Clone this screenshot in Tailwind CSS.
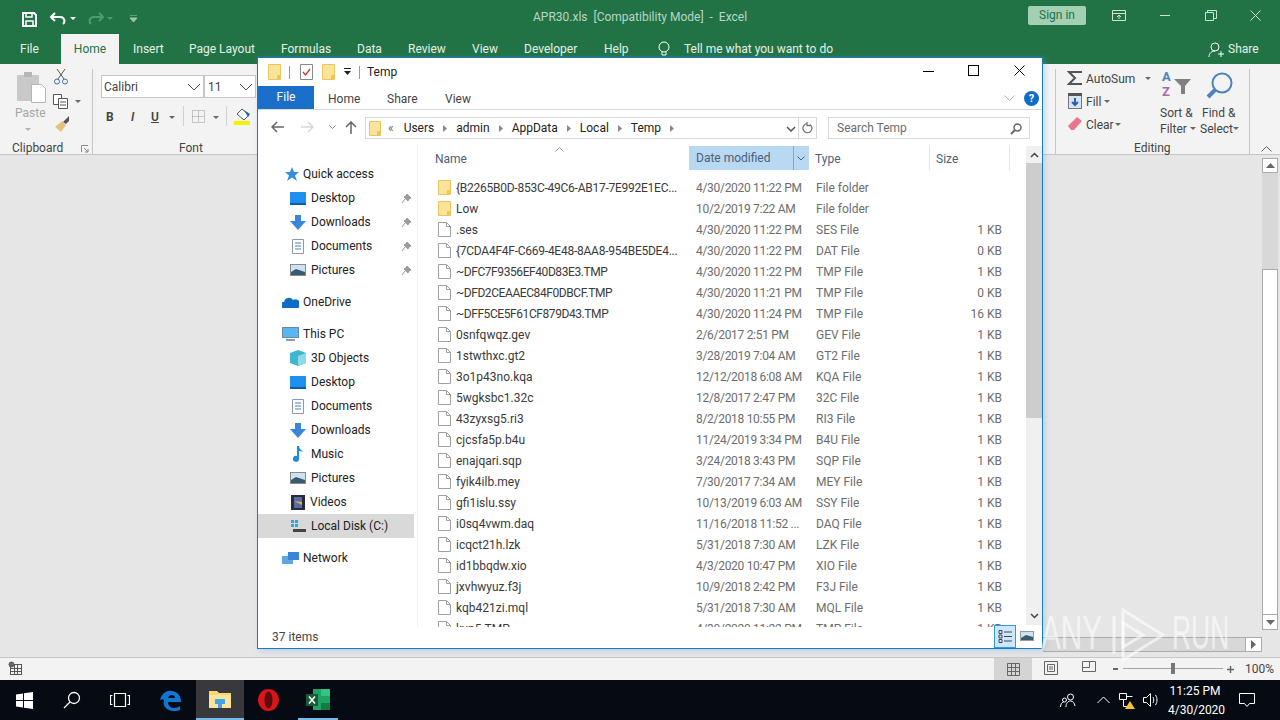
<!DOCTYPE html>
<html>
<head>
<meta charset="utf-8">
<script src="https://cdn.jsdelivr.net/npm/@tailwindcss/browser@4"></script>
</head>
<body class="w-[1280px] h-[720px] overflow-hidden font-['Roboto',sans-serif] text-[12px] relative bg-[#e6e6e6]">
<div class="flex flex-col h-[720px]">
  <!-- title bar -->
  <div class="h-[38px] bg-[#217346] flex items-center text-white relative shrink-0">
    <svg class="ml-[22px]" width="15" height="15" viewBox="0 0 15 15" fill="none" stroke="#fff" stroke-width="2"><path d="M1 1h11l2 2v11H1z"/><path d="M4 1v4h6V1M4 14V9h7v5" stroke-width="1.5"/></svg>
    <svg class="ml-[13px]" width="17" height="14" viewBox="0 0 17 14" fill="none" stroke="#fff" stroke-width="2"><path d="M5 1L1 5l4 4M1 5h9a4 4 0 0 1 3 7"/></svg>
    <svg class="ml-[3px]" width="7" height="4"><path d="M0 0h6L3 3z" fill="#fff"/></svg>
    <svg class="ml-[10px]" width="17" height="14" viewBox="0 0 17 14" fill="none" stroke="#4d9b70" stroke-width="2"><path d="M12 1l4 4-4 4M16 5H7a4 4 0 0 0-3 7"/></svg>
    <svg class="ml-[3px]" width="7" height="4"><path d="M0 0h6L3 3z" fill="#4d9b70"/></svg>
    <svg class="ml-[15px]" width="9" height="8"><path d="M1 0h7M1 3h7L4.500 7z" stroke="#9cc7ae" fill="#9cc7ae"/></svg>
    <div class="absolute left-[533px] top-[8px] text-[#b9d6c6] text-[12px] whitespace-pre">APR30.xls  [Compatibility Mode]  -  Excel</div>
    <div class="absolute left-[1028px] top-[6px] w-[58px] h-[19px] bg-[#a3d0b5] rounded-[2px] text-[#217346] text-center leading-[19px]">Sign in</div>
    <svg class="absolute left-[1112px] top-[10px]" width="14" height="11" fill="none" stroke="#cfe3d7"><path d="M.500.500h13v10H.500zM.500 3.500h13M7 9V5M5 7l2-2 2 2"/></svg>
    <div class="absolute left-[1160px] top-[15px] w-[10px] h-px bg-[#cfe3d7]"></div>
    <svg class="absolute left-[1205px] top-[10px]" width="12" height="11" fill="none" stroke="#cfe3d7"><path d="M.500 2.500h8v8h-8zM2.500 2.500V.500h9v8h-3"/></svg>
    <svg class="absolute left-[1250px] top-[10px]" width="11" height="11" fill="none" stroke="#cfe3d7"><path d="M.500.500l10 10M10.500.500l-10 10"/></svg>
  </div>
  <!-- tabs -->
  <div class="h-[26px] bg-[#217346] flex items-center text-[#e6f0ea] relative shrink-0">
    <span class="absolute left-[20px] top-[2px]">File</span>
    <div class="absolute left-[61px] top-[-4px] w-[58px] h-[30px] bg-[#f3f3f3] text-[#217346] text-center leading-[30px]">Home</div>
    <span class="absolute left-[133px] top-[2px]">Insert</span>
    <span class="absolute left-[189px] top-[2px]">Page Layout</span>
    <span class="absolute left-[281px] top-[2px]">Formulas</span>
    <span class="absolute left-[357px] top-[2px]">Data</span>
    <span class="absolute left-[408px] top-[2px]">Review</span>
    <span class="absolute left-[472px] top-[2px]">View</span>
    <span class="absolute left-[524px] top-[2px]">Developer</span>
    <span class="absolute left-[604px] top-[2px]">Help</span>
    <svg class="absolute left-[658px] top-[3px]" width="12" height="16" fill="none" stroke="#fff"><circle cx="6" cy="6" r="5"/><path d="M4 11v3h4v-3"/></svg>
    <span class="absolute left-[684px] top-[2px]">Tell me what you want to do</span>
    <svg class="absolute left-[1208px] top-[3px]" width="16" height="18" fill="none" stroke="#fff"><circle cx="7" cy="6" r="4"/><path d="M1 16c0-4 3-6 6-6M10 13h6M13 10v6"/></svg>
    <span class="absolute left-[1228px] top-[2px]">Share</span>
  </div>
  <!-- ribbon -->
  <div class="h-[91px] bg-[#f3f3f3] border-b border-[#c6c6c6] relative text-[#444] shrink-0">
    <svg class="absolute left-[16px] top-[8px]" width="30" height="34"><rect x="1" y="3" width="22" height="26" fill="#c9c9c9"/><rect x="8" y="0" width="8" height="5" fill="#b5b5b5"/><path d="M15.500 12.500h10l4 4v14h-14z" fill="#fff" stroke="#b5b5b5"/></svg>
    <span class="absolute left-[15px] top-[40px] text-[#a6a6a6]">Paste</span>
    <svg class="absolute left-[25px] top-[64px]" width="7" height="4"><path d="M0 0h6L3 3z" fill="#b5b5b5"/></svg>
    <svg class="absolute left-[53px] top-[5px]" width="16" height="16" fill="none" stroke="#555"><path d="M4 0l7 10M12 0L5 10" /><circle cx="4" cy="12.500" r="2.500" stroke="#3a6ea5"/><circle cx="12" cy="12.500" r="2.500" stroke="#3a6ea5"/></svg>
    <svg class="absolute left-[53px] top-[30px]" width="16" height="15" fill="#fff" stroke="#555"><path d="M.500.500h8v10h-8z"/><path d="M5.500 4.500h9v10h-9zM7 8h6M7 11h6"/></svg>
    <svg class="absolute left-[75px] top-[36px]" width="7" height="4"><path d="M0 0h6L3 3z" fill="#666"/></svg>
    <svg class="absolute left-[54px] top-[52px]" width="16" height="16"><path d="M9 6l6-6v5l-3 3z" fill="#555"/><path d="M1 11l7-6 4 4-5 7z" fill="#e3c27f"/></svg>
    <span class="absolute left-[12px] top-[75px] text-[#444]">Clipboard</span>
    <svg class="absolute left-[81px] top-[81px]" width="8" height="8" fill="none" stroke="#888"><path d="M.500 7V.500H7M3 3l4 4M7 4v3H4"/></svg>
    <div class="absolute left-[92px] top-[5px] w-px h-[85px] bg-[#c6c6c6]"></div>

    <div class="absolute left-[101px] top-[11px] w-[103px] h-[23px] bg-white border border-[#c6c6c6] pl-[2px] leading-[22px]">Calibri<svg class="absolute right-[2px] top-[7px]" width="14" height="8" fill="none" stroke="#555"><path d="M1 1l6 6 6-6"/></svg></div>
    <div class="absolute left-[204px] top-[11px] w-[52px] h-[23px] bg-white border border-[#c6c6c6] pl-[3px] leading-[22px]">11<svg class="absolute right-[2px] top-[7px]" width="14" height="8" fill="none" stroke="#555"><path d="M1 1l6 6 6-6"/></svg></div>
    <span class="absolute left-[106px] top-[44px] font-bold">B</span>
    <span class="absolute left-[131px] top-[44px] italic font-semibold">I</span>
    <span class="absolute left-[151px] top-[44px] underline font-semibold">U</span>
    <svg class="absolute left-[169px] top-[52px]" width="7" height="4"><path d="M0 0h6L3 3z" fill="#666"/></svg>
    <div class="absolute left-[183px] top-[42px] w-px h-[20px] bg-[#d0d0d0]"></div>
    <svg class="absolute left-[192px] top-[46px]" width="13" height="13" fill="none" stroke="#999" stroke-dasharray="1 1"><path d="M.500.500h12v12H.500zM6.500.500v12M.500 6.500h12"/></svg>
    <svg class="absolute left-[213px] top-[52px]" width="7" height="4"><path d="M0 0h6L3 3z" fill="#666"/></svg>
    <div class="absolute left-[226px] top-[42px] w-px h-[20px] bg-[#d0d0d0]"></div>
    <svg class="absolute left-[234px] top-[44px]" width="17" height="18"><path d="M8 1l7 6-5 5-7-6z" fill="#fff" stroke="#555"/><path d="M10 2l6 4-2 3z" fill="#2e5fa8"/><rect x="0" y="13" width="16" height="4" fill="#f5f200"/></svg>
    <span class="absolute left-[179px] top-[75px]">Font</span>

    <div class="absolute left-[1055px] top-[5px] w-px h-[85px] bg-[#c6c6c6]"></div>
    <svg class="absolute left-[1067px] top-[6px]" width="16" height="16" fill="none" stroke="#555" stroke-width="2"><path d="M15 2H2l6 6-6 6h13"/></svg>
    <span class="absolute left-[1086px] top-[6px]">AutoSum</span>
    <svg class="absolute left-[1145px] top-[13px]" width="7" height="4"><path d="M0 0h6L3 3z" fill="#666"/></svg>
    <svg class="absolute left-[1068px] top-[29px]" width="14" height="16"><rect x=".5" y=".5" width="13" height="15" fill="#d8e4f2" stroke="#777"/><rect y="0" width="14" height="3" fill="#555"/><path d="M7 5v7M4 9l3 3 3-3" stroke="#2e5fa8" stroke-width="2" fill="none"/></svg>
    <span class="absolute left-[1086px] top-[29px]">Fill</span>
    <svg class="absolute left-[1104px] top-[36px]" width="7" height="4"><path d="M0 0h6L3 3z" fill="#666"/></svg>
    <svg class="absolute left-[1068px] top-[53px]" width="14" height="13"><path d="M0 9l9-9 5 4-8 9H3z" fill="#e9778c"/></svg>
    <span class="absolute left-[1086px] top-[52px]">Clear</span>
    <svg class="absolute left-[1115px] top-[59px]" width="7" height="4"><path d="M0 0h6L3 3z" fill="#666"/></svg>
    <span class="absolute left-[1162px] top-[6px] font-bold text-[13px] leading-[14px] text-[#4d82bf]">A</span>
    <span class="absolute left-[1162px] top-[21px] font-bold text-[13px] leading-[14px] text-[#a26db0]">Z</span>
    <svg class="absolute left-[1174px] top-[15px]" width="17" height="15"><path d="M0 0h17l-6 7v8H7V7z" fill="#808080"/></svg>
    <span class="absolute left-[1160px] top-[40px]">Sort &amp;</span>
    <span class="absolute left-[1160px] top-[56px]">Filter</span>
    <svg class="absolute left-[1190px] top-[63px]" width="7" height="4"><path d="M0 0h6L3 3z" fill="#666"/></svg>
    <svg class="absolute left-[1205px] top-[7px]" width="30" height="30" fill="none" stroke="#4d82bf"><circle cx="17" cy="12" r="9.500" stroke-width="2"/><path d="M10 19l-7 7" stroke-width="4"/></svg>
    <span class="absolute left-[1202px] top-[40px]">Find &amp;</span>
    <span class="absolute left-[1200px] top-[56px]">Select</span>
    <svg class="absolute left-[1233px] top-[63px]" width="7" height="4"><path d="M0 0h6L3 3z" fill="#666"/></svg>
    <span class="absolute left-[1134px] top-[75px]">Editing</span>
    <div class="absolute left-[1249px] top-[5px] w-px h-[85px] bg-[#c6c6c6]"></div>
    <svg class="absolute left-[1261px] top-[82px]" width="11" height="6" fill="none" stroke="#666"><path d="M.500 5.500l5-5 5 5"/></svg>
  </div>
  <!-- sheet -->
  <div class="flex-1 bg-[#e6e6e6] relative">
    <div class="absolute left-[1262px] top-[3px] w-[16px] h-[472px] bg-[#d8d8d8]">
      <div class="h-[15px] bg-white border border-[#ababab] flex items-center justify-center"><svg width="9" height="5"><path d="M0 5h9L4.500 0z" fill="#666"/></svg></div>
      <div class="absolute top-[111px] left-0 w-[16px] h-[346px] bg-white border border-[#ababab]"></div>
      <div class="absolute bottom-0 left-0 w-[16px] h-[16px] bg-white border border-[#ababab] flex items-center justify-center"><svg width="9" height="5"><path d="M0 0h9L4.500 5z" fill="#666"/></svg></div>
    </div>
    <div class="absolute left-[1043px] top-[482px] w-[202px] h-[15px] bg-[#d8d8d8] border-y border-[#ababab]"></div>
    <div class="absolute left-[1245px] top-[482px] w-[17px] h-[15px] bg-white border border-[#ababab] flex items-center justify-center"><svg width="5" height="9"><path d="M0 0l5 4.500L0 9z" fill="#666"/></svg></div>
    <div class="absolute left-0 right-0 bottom-0 h-px bg-[#c6c6c6]"></div>
  </div>
  <!-- status bar -->
  <div class="h-[22px] bg-[#f3f3f3] relative shrink-0 text-[#444]">
    <svg class="absolute left-[8px] top-[3px]" width="14" height="14" fill="none" stroke="#555"><rect x="2.500" y="3.500" width="11" height="10"/><path d="M2.500 7.500h11M2.500 10.500h11M6.500 3.500v10M9.500 3.500v10"/><circle cx="3.500" cy="3.500" r="2.500" fill="#666"/></svg>
    <div class="absolute left-[994px] top-0 w-[38px] h-[22px] bg-[#d4d4d4] flex items-center justify-center"><svg width="13" height="13" fill="none" stroke="#666"><path d="M.500.500h12v12H.500zM4.500.500v12M8.500.500v12M.500 4.500h12M.500 8.500h12"/></svg></div>
    <svg class="absolute left-[1044px] top-[3px]" width="14" height="14" fill="none" stroke="#666"><path d="M.500.500h13v13H.500zM3.500 3.500h7v7h-7zM5 6h4M5 8h4"/></svg>
    <svg class="absolute left-[1082px] top-[3px]" width="14" height="14" fill="none" stroke="#666"><path d="M.500.500h13v10H.500zM7.500.500v6M.500 6.500h7"/></svg>
    <div class="absolute left-[1113px] top-[10px] w-[5px] h-[2px] bg-[#666]"></div>
    <div class="absolute left-[1123px] top-[10px] w-[100px] h-px bg-[#a6a6a6]"></div>
    <div class="absolute left-[1171px] top-[5px] w-[4px] h-[11px] bg-[#777]"></div>
    <svg class="absolute left-[1227px] top-[8px]" width="7" height="7"><path d="M0 3.500h7M3.500 0v7" stroke="#666" stroke-width="1.500"/></svg>
    <span class="absolute left-[1245px] top-[2px] text-[#444]">100%</span>
  </div>
  <!-- taskbar -->
  <div class="h-[40px] bg-[#060a13] relative shrink-0 text-white">
    <svg class="absolute left-[16px] top-[12px]" width="17" height="17" fill="#fff"><path d="M0 2.500l7-1v6.500H0zM8 1.300l9-1.300v8H8zM0 9h7v6.500l-7-1zM8 9h9v8l-9-1.300z"/></svg>
    <svg class="absolute left-[63px] top-[11px]" width="18" height="18" fill="none" stroke="#fff" stroke-width="1.300"><circle cx="11" cy="7" r="5.500"/><path d="M7 11l-6 6"/></svg>
    <svg class="absolute left-[110px] top-[13px]" width="20" height="14" fill="none" stroke="#fff" stroke-width="1.200"><path d="M4.500.500h11v13h-11zM2.500 2.500H.500v9h2M17.500 2.500h2v9h-2"/></svg>
    <svg class="absolute left-[160px] top-[10px]" width="22" height="21" viewBox="0 0 22 21"><path fill-rule="evenodd" fill="#0f78d4" d="M0 10C2 3 7 0 12 1c6 1 9 5 9 11H8c0 4 3 6 6 6 2 0 5-1 6-2v4c-6 2-11 1-14-2-2-2-3-4-2-7C4 9 2 9 0 10zM8 8h7c0-4-6-4-7 0z"/></svg>
    <div class="absolute left-[196px] top-0 w-[48px] h-[40px] bg-[#39393d] border-b-[2px] border-[#76b9ed]"></div>
    <svg class="absolute left-[209px] top-[10px]" width="22" height="19"><path d="M0 1h8l2 2h12v15H0z" fill="#f8d775"/><rect x="0" y="5" width="22" height="13" fill="#fce49c"/><path d="M6 9h10v5h-3v4H9v-4H6z" fill="#3fa6e8"/></svg>
    <svg class="absolute left-[258px] top-[9px]" width="21" height="22"><ellipse cx="10.500" cy="11" rx="10.500" ry="11" fill="#d8141c"/><ellipse cx="10.500" cy="11" rx="4" ry="8.500" fill="#5c0a0e"/></svg>
    <svg class="absolute left-[306px] top-[9px]" width="25" height="22"><rect x="7" y="0" width="17" height="21" fill="#21a366"/><rect x="15" y="0" width="9" height="7" fill="#33c481"/><rect x="15" y="14" width="9" height="7" fill="#107c41"/><rect x="0" y="5" width="12" height="12" fill="#185c37"/><path d="M3 7.500l6 7M9 7.500l-6 7" stroke="#fff" stroke-width="1.500"/></svg>
    <div class="absolute left-[298px] bottom-0 w-[40px] h-[2px] bg-[#76b9ed]"></div>
    <svg class="absolute left-[1060px] top-[13px]" width="16" height="15" fill="none" stroke="#fff"><circle cx="10.500" cy="4" r="3"/><path d="M6 14c0-4 2-6 4.500-6s4 2 4.500 5M.500 14c.2-3 1-4.500 3-5"/><circle cx="4.500" cy="7" r="2"/></svg>
    <svg class="absolute left-[1097px] top-[16px]" width="13" height="8" fill="none" stroke="#fff"><path d="M.500 7l6-6 6 6"/></svg>
    <svg class="absolute left-[1119px] top-[13px]" width="16" height="16" fill="none" stroke="#fff"><path d="M.500.500h7v6h-7zM7.500 3.500h6M4.500 6.500v7h5"/><path d="M11 8l5 8H6z" fill="#f4c430" stroke="none"/></svg>
    <svg class="absolute left-[1143px] top-[13px]" width="16" height="14" fill="none" stroke="#fff"><path d="M.500 4.500h3l4-4v13l-4-4h-3zM10 4c1 2 1 4 0 6M12.500 2c2 3 2 7 0 10"/></svg>
    <div class="absolute left-[1168px] top-[2px] w-[54px] text-center leading-[19px]">11:25 PM<br>4/30/2020</div>
    <svg class="absolute left-[1239px] top-[13px]" width="16" height="15" fill="none" stroke="#fff"><path d="M.500.500h15v10h-5l-2.500 3-2.500-3h-5z"/></svg>
  </div>
</div>

<!-- explorer window -->
<div class="absolute left-[257px] top-[57px] w-[786px] h-[592px] bg-white border border-[#1a79c7] shadow-[2px_2px_6px_rgba(120,170,220,0.35)] flex flex-col text-[#222]">
  <!-- title -->
  <div class="h-[28px] flex items-center relative shrink-0">
    <svg class="ml-[10px]" width="14" height="16"><path d="M.500.500h12v15H.500z" fill="#fbe39a" stroke="#e8c65f"/><path d="M9 11h3v4H9z" fill="#eec84f"/></svg>
    <div class="ml-[7px] w-px h-[13px] bg-[#999]"></div>
    <svg class="ml-[10px]" width="13" height="16" fill="#fff" stroke="#888"><path d="M.500.500h12v15H.500z"/><path d="M3 8l2.500 3L10 5" stroke="#c6362e" fill="none" stroke-width="1.300"/></svg>
    <svg class="ml-[9px]" width="14" height="16"><path d="M.500.500h12v15H.500z" fill="#fbe39a" stroke="#e8c65f"/><path d="M9 11h3v4H9z" fill="#eec84f"/></svg>
    <svg class="ml-[7px]" width="9" height="8"><path d="M1 .500h7" stroke="#222"/><path d="M1 3h7L4.500 7z" fill="#222"/></svg>
    <div class="ml-[7px] w-px h-[13px] bg-[#999]"></div>
    <span class="ml-[7px] text-[12px]">Temp</span>
    <div class="absolute left-[665px] top-[13px] w-[11px] h-px bg-black"></div>
    <div class="absolute left-[710px] top-[7px] w-[11px] h-[11px] border border-black"></div>
    <svg class="absolute left-[756px] top-[7px]" width="11" height="11" fill="none" stroke="#000"><path d="M.500.500l10 10M10.500.500l-10 10"/></svg>
  </div>
  <!-- tabs -->
  <div class="h-[24px] flex items-center relative border-b border-[#dadada] shrink-0 text-[#444]">
    <div class="w-[56px] h-[23px] bg-[#1a6fc9] text-white text-center leading-[23px]">File</div>
    <span class="absolute left-[70px] top-[4px]">Home</span>
    <span class="absolute left-[129px] top-[4px]">Share</span>
    <span class="absolute left-[187px] top-[4px]">View</span>
    <svg class="absolute left-[746px] top-[9px]" width="11" height="6" fill="none" stroke="#b0b0b0"><path d="M.500.500l5 5 5-5"/></svg>
    <div class="absolute left-[766px] top-[5px] w-[15px] h-[15px] rounded-full bg-[#0f6cc4] text-white text-center leading-[15px] font-bold text-[11px]">?</div>
  </div>
  <!-- address -->
  <div class="h-[36px] flex items-center relative shrink-0">
    <svg class="absolute left-[13px] top-[11px]" width="13" height="12" fill="none" stroke="#666" stroke-width="1.500"><path d="M6 1L1 6l5 5M1 6h12"/></svg>
    <svg class="absolute left-[43px] top-[11px]" width="13" height="12" fill="none" stroke="#d8d8d8" stroke-width="1.500"><path d="M7 1l5 5-5 5M12 6H0"/></svg>
    <svg class="absolute left-[71px] top-[15px]" width="7" height="4" fill="none" stroke="#888"><path d="M.500.500l3 3 3-3"/></svg>
    <svg class="absolute left-[87px] top-[11px]" width="12" height="13" fill="none" stroke="#666" stroke-width="1.500"><path d="M1 6l5-5 5 5M6 1v12"/></svg>
    <div class="absolute left-[107px] top-[7px] w-[434px] h-[22px] border border-[#d9d9d9] flex items-center">
      <svg class="ml-[3px]" width="13" height="15"><path d="M.500.500h11v14H.500z" fill="#fbe39a" stroke="#e8c65f"/><path d="M8 10h3v4H8z" fill="#eec84f"/></svg>
      <span class="ml-[6px] text-[#666]">«</span>
      <span class="ml-[10px]">Users</span><svg class="mx-[9px]" width="4" height="7"><path d="M0 0l4 3.500L0 7z" fill="#888"/></svg>
      <span>admin</span><svg class="mx-[9px]" width="4" height="7"><path d="M0 0l4 3.500L0 7z" fill="#888"/></svg>
      <span>AppData</span><svg class="mx-[9px]" width="4" height="7"><path d="M0 0l4 3.500L0 7z" fill="#888"/></svg>
      <span>Local</span><svg class="mx-[9px]" width="4" height="7"><path d="M0 0l4 3.500L0 7z" fill="#888"/></svg>
      <span>Temp</span><svg class="mx-[9px]" width="4" height="7"><path d="M0 0l4 3.500L0 7z" fill="#888"/></svg>
      <svg class="absolute left-[420px] top-[8px]" width="10" height="6" fill="none" stroke="#555" stroke-width="1.500"><path d="M1 1l4 4 4-4"/></svg>
    </div>
    <div class="absolute left-[540px] top-[7px] w-[19px] h-[22px] border border-[#d9d9d9] flex items-center justify-center"><svg width="11" height="12" fill="none" stroke="#777" stroke-width="1.300"><path d="M8 2.500a4.500 4.500 0 1 1-3-.8M5 0v3.500h3.500"/></svg></div>
    <div class="absolute left-[570px] top-[7px] w-[202px] h-[22px] border border-[#d9d9d9] pl-[8px] leading-[20px] text-[#6d6d6d]">Search Temp<svg class="absolute right-[7px] top-[5px]" width="12" height="12" fill="none" stroke="#666" stroke-width="1.500"><circle cx="7.500" cy="4.500" r="3.500"/><path d="M5 7l-4 4" stroke-width="2"/></svg></div>
  </div>
  <!-- main -->
  <div class="flex-1 flex min-h-0">
    <!-- nav -->
    <div class="w-[160px] shrink-0 border-r border-[#f0f0f0] pt-[16px] pr-[3px] relative">
      <div class="h-[24px] flex items-center pl-[27px]"><svg width="14" height="14"><path d="M7 0l2 5h5l-4 3.500 2 5.500-5-3.500L2 14l2-5.500L0 5h5z" fill="#2f8fe0"/></svg><span class="ml-[4px]">Quick access</span></div>
      <div class="h-[24px] flex items-center pl-[32px]"><svg width="16" height="13"><rect width="16" height="13" fill="#1e90ef"/><rect y="11" width="16" height="2" fill="#0f5c9e"/></svg><span class="ml-[5px]">Desktop</span><svg class="absolute left-[144px]" width="10" height="10"><path d="M5 1l4 4-2 1-1 2-4-4 2-1zM3 6l-3 4" fill="#9a9a9a" stroke="#9a9a9a"/></svg></div>
      <div class="h-[24px] flex items-center pl-[32px]"><svg width="16" height="15"><path d="M5 0h6v6h5l-8 9-8-9h5z" fill="#3a85d5"/></svg><span class="ml-[5px]">Downloads</span><svg class="absolute left-[144px]" width="10" height="10"><path d="M5 1l4 4-2 1-1 2-4-4 2-1zM3 6l-3 4" fill="#9a9a9a" stroke="#9a9a9a"/></svg></div>
      <div class="h-[24px] flex items-center pl-[34px]"><svg width="12" height="15" fill="#fff" stroke="#8a9bb0"><path d="M.500.500h11v14H.500z"/><path d="M3 4h6M3 7h6M3 10h6" stroke="#3a85d5"/></svg><span class="ml-[7px]">Documents</span><svg class="absolute left-[144px]" width="10" height="10"><path d="M5 1l4 4-2 1-1 2-4-4 2-1zM3 6l-3 4" fill="#9a9a9a" stroke="#9a9a9a"/></svg></div>
      <div class="h-[24px] flex items-center pl-[32px]"><svg width="16" height="12"><rect x=".5" y=".5" width="15" height="11" fill="#cfe2f3" stroke="#8a8a8a"/><path d="M1 8l5-3 9 3v3H1z" fill="#3c5a6e"/></svg><span class="ml-[5px]">Pictures</span><svg class="absolute left-[144px]" width="10" height="10"><path d="M5 1l4 4-2 1-1 2-4-4 2-1zM3 6l-3 4" fill="#9a9a9a" stroke="#9a9a9a"/></svg></div>
      <div class="h-[24px] mt-[8px] flex items-center pl-[24px]"><svg width="17" height="11"><path d="M1 11a3 3 0 0 1 1-6 5 5 0 0 1 9-2 4 4 0 0 1 5 8z" fill="#0f6cc4"/></svg><span class="ml-[4px]">OneDrive</span></div>
      <div class="h-[24px] mt-[8px] flex items-center pl-[24px]"><svg width="17" height="15"><rect x=".5" y=".5" width="16" height="10" fill="#5bb5f0" stroke="#6a8aa0"/><rect x="4" y="12" width="9" height="2" fill="#8a9bb0"/></svg><span class="ml-[4px]">This PC</span></div>
      <div class="h-[24px] flex items-center pl-[32px]"><svg width="16" height="16"><path d="M8 0l8 3v10l-8 3-8-3V3z" fill="#3fb5cf"/><path d="M8 6l8-3v10l-8 3z" fill="#8bdbe8"/></svg><span class="ml-[5px]">3D Objects</span></div>
      <div class="h-[24px] flex items-center pl-[32px]"><svg width="16" height="13"><rect width="16" height="13" fill="#1e90ef"/><rect y="11" width="16" height="2" fill="#0f5c9e"/></svg><span class="ml-[5px]">Desktop</span></div>
      <div class="h-[24px] flex items-center pl-[34px]"><svg width="12" height="15" fill="#fff" stroke="#8a9bb0"><path d="M.500.500h11v14H.500z"/><path d="M3 4h6M3 7h6M3 10h6" stroke="#3a85d5"/></svg><span class="ml-[7px]">Documents</span></div>
      <div class="h-[24px] flex items-center pl-[32px]"><svg width="16" height="15"><path d="M5 0h6v6h5l-8 9-8-9h5z" fill="#3a85d5"/></svg><span class="ml-[5px]">Downloads</span></div>
      <div class="h-[24px] flex items-center pl-[35px]"><svg width="11" height="16"><path d="M4 0h2c0 3 3 4 4 6-2-1-3-1-4-1v8a3 3 0 1 1-2-3z" fill="#1f8ae0"/></svg><span class="ml-[7px]">Music</span></div>
      <div class="h-[24px] flex items-center pl-[32px]"><svg width="16" height="12"><rect x=".5" y=".5" width="15" height="11" fill="#cfe2f3" stroke="#8a8a8a"/><path d="M1 8l5-3 9 3v3H1z" fill="#3c5a6e"/></svg><span class="ml-[5px]">Pictures</span></div>
      <div class="h-[24px] flex items-center pl-[33px]"><svg width="14" height="15"><rect width="14" height="15" fill="#2a2a3a"/><rect x="3" y="2" width="8" height="11" fill="#5a6ca8"/><path d="M3 6l8 4v-3z" fill="#e0b040"/></svg><span class="ml-[5px]">Videos</span></div>
      <div class="h-[24px] flex items-center pl-[32px] bg-[#d9d9d9]"><svg width="16" height="14"><path d="M1 1h3v3H1zM5 1h3v3H5zM1 5h3v3H1zM5 5h3v3H5z" fill="#29a8e0"/><rect x="3" y="10" width="13" height="3" fill="#444"/></svg><span class="ml-[5px]">Local Disk (C:)</span></div>
      <div class="h-[24px] mt-[8px] flex items-center pl-[24px]"><svg width="17" height="15"><rect x="0" y="5" width="11" height="8" fill="#5aa8e0"/><rect x="6" y="1" width="11" height="8" fill="#3a85d5"/></svg><span class="ml-[4px]">Network</span></div>
    </div>
    <!-- list -->
    <div class="flex-1 relative min-w-0 overflow-hidden">
      <!-- header row -->
      <div class="h-[25px] relative text-[#4c607a]">
        <span class="absolute left-[17px] top-[4px]">Name</span>
        <svg class="absolute left-[137px] top-[1px]" width="9" height="5" fill="none" stroke="#999"><path d="M.500 4.500l4-4 4 4"/></svg>
        <div class="absolute left-[271px] top-0 w-[120px] h-[24px] bg-[#b9d9f2] pl-[7px] leading-[25px]">Date modified<div class="absolute right-[15px] top-0 w-px h-[24px] bg-[#88a8c0]"></div><svg class="absolute right-[4px] top-[10px]" width="8" height="5" fill="none" stroke="#4c607a"><path d="M.500.500l3.500 3.500 3.500-3.500"/></svg></div>
        <span class="absolute left-[397px] top-[4px]">Type</span>
        <div class="absolute left-[511px] top-0 w-px h-[24px] bg-[#e5e5e5]"></div>
        <span class="absolute left-[518px] top-[4px]">Size</span>
        <div class="absolute left-[591px] top-0 w-px h-[24px] bg-[#e5e5e5]"></div>
      </div>
      <!-- scrollbar -->
      <div class="absolute right-0 top-0 w-[16px] bottom-[2px] bg-[#f0f0f0]">
        <svg class="absolute left-[4px] top-[6px]" width="9" height="6" fill="none" stroke="#444" stroke-width="1.500"><path d="M1 5l3.500-3.500L8 5"/></svg>
        <div class="absolute left-0 top-[17px] w-[16px] h-[255px] bg-[#cdcdcd]"></div>
        <svg class="absolute left-[4px] bottom-[6px]" width="9" height="6" fill="none" stroke="#444" stroke-width="1.500"><path d="M1 1l3.500 3.500L8 1"/></svg>
      </div>
      <!-- rows -->
      <div class="absolute left-0 top-[31px] w-[608px] bottom-0 overflow-hidden text-[#3a3a3a]">
        <div class="grid grid-cols-[17px_241px_120px_100px_90px] pl-[20px] h-[21px] items-center"><svg width="14" height="15"><path d="M.500.500h12v14H.500z" fill="#fbe39a" stroke="#e8c65f"/><path d="M9 10h3v4H9z" fill="#eec84f"/></svg><span class="pl-[1px] whitespace-nowrap tracking-[-0.25px]">{B2265B0D-853C-49C6-AB17-7E992E1EC...</span><span class="text-[#6d6d6d] tracking-[-0.3px]">4/30/2020 11:22 PM</span><span class="text-[#6d6d6d]">File folder</span><span></span></div>
        <div class="grid grid-cols-[17px_241px_120px_100px_90px] pl-[20px] h-[21px] items-center"><svg width="14" height="15"><path d="M.500.500h12v14H.500z" fill="#fbe39a" stroke="#e8c65f"/><path d="M9 10h3v4H9z" fill="#eec84f"/></svg><span class="pl-[1px] whitespace-nowrap">Low</span><span class="text-[#6d6d6d] tracking-[-0.3px]">10/2/2019 7:22 AM</span><span class="text-[#6d6d6d]">File folder</span><span></span></div>
        <div class="grid grid-cols-[17px_241px_120px_100px_90px] pl-[20px] h-[21px] items-center"><svg width="13" height="15" fill="#fff" stroke="#a0a0a0"><path d="M.500.500h8l4 4v10H.500zM8.500.500v4h4"/></svg><span class="pl-[1px] whitespace-nowrap">.ses</span><span class="text-[#6d6d6d] tracking-[-0.3px]">4/30/2020 11:22 PM</span><span class="text-[#6d6d6d]">SES File</span><span class="text-[#6d6d6d] text-right pr-[4px]">1 KB</span></div>
        <div class="grid grid-cols-[17px_241px_120px_100px_90px] pl-[20px] h-[21px] items-center"><svg width="13" height="15" fill="#fff" stroke="#a0a0a0"><path d="M.500.500h8l4 4v10H.500zM8.500.500v4h4"/></svg><span class="pl-[1px] whitespace-nowrap tracking-[-0.25px]">{7CDA4F4F-C669-4E48-8AA8-954BE5DE4...</span><span class="text-[#6d6d6d] tracking-[-0.3px]">4/30/2020 11:22 PM</span><span class="text-[#6d6d6d]">DAT File</span><span class="text-[#6d6d6d] text-right pr-[4px]">0 KB</span></div>
        <div class="grid grid-cols-[17px_241px_120px_100px_90px] pl-[20px] h-[21px] items-center"><svg width="13" height="15" fill="#fff" stroke="#a0a0a0"><path d="M.500.500h8l4 4v10H.500zM8.500.500v4h4"/></svg><span class="pl-[1px] whitespace-nowrap tracking-[-0.42px]">~DFC7F9356EF40D83E3.TMP</span><span class="text-[#6d6d6d] tracking-[-0.3px]">4/30/2020 11:22 PM</span><span class="text-[#6d6d6d]">TMP File</span><span class="text-[#6d6d6d] text-right pr-[4px]">1 KB</span></div>
        <div class="grid grid-cols-[17px_241px_120px_100px_90px] pl-[20px] h-[21px] items-center"><svg width="13" height="15" fill="#fff" stroke="#a0a0a0"><path d="M.500.500h8l4 4v10H.500zM8.500.500v4h4"/></svg><span class="pl-[1px] whitespace-nowrap tracking-[-0.42px]">~DFD2CEAAEC84F0DBCF.TMP</span><span class="text-[#6d6d6d] tracking-[-0.3px]">4/30/2020 11:21 PM</span><span class="text-[#6d6d6d]">TMP File</span><span class="text-[#6d6d6d] text-right pr-[4px]">0 KB</span></div>
        <div class="grid grid-cols-[17px_241px_120px_100px_90px] pl-[20px] h-[21px] items-center"><svg width="13" height="15" fill="#fff" stroke="#a0a0a0"><path d="M.500.500h8l4 4v10H.500zM8.500.500v4h4"/></svg><span class="pl-[1px] whitespace-nowrap tracking-[-0.42px]">~DFF5CE5F61CF879D43.TMP</span><span class="text-[#6d6d6d] tracking-[-0.3px]">4/30/2020 11:24 PM</span><span class="text-[#6d6d6d]">TMP File</span><span class="text-[#6d6d6d] text-right pr-[4px]">16 KB</span></div>
        <div class="grid grid-cols-[17px_241px_120px_100px_90px] pl-[20px] h-[21px] items-center"><svg width="13" height="15" fill="#fff" stroke="#a0a0a0"><path d="M.500.500h8l4 4v10H.500zM8.500.500v4h4"/></svg><span class="pl-[1px] whitespace-nowrap">0snfqwqz.gev</span><span class="text-[#6d6d6d] tracking-[-0.3px]">2/6/2017 2:51 PM</span><span class="text-[#6d6d6d]">GEV File</span><span class="text-[#6d6d6d] text-right pr-[4px]">1 KB</span></div>
        <div class="grid grid-cols-[17px_241px_120px_100px_90px] pl-[20px] h-[21px] items-center"><svg width="13" height="15" fill="#fff" stroke="#a0a0a0"><path d="M.500.500h8l4 4v10H.500zM8.500.500v4h4"/></svg><span class="pl-[1px] whitespace-nowrap">1stwthxc.gt2</span><span class="text-[#6d6d6d] tracking-[-0.3px]">3/28/2019 7:04 AM</span><span class="text-[#6d6d6d]">GT2 File</span><span class="text-[#6d6d6d] text-right pr-[4px]">1 KB</span></div>
        <div class="grid grid-cols-[17px_241px_120px_100px_90px] pl-[20px] h-[21px] items-center"><svg width="13" height="15" fill="#fff" stroke="#a0a0a0"><path d="M.500.500h8l4 4v10H.500zM8.500.500v4h4"/></svg><span class="pl-[1px] whitespace-nowrap">3o1p43no.kqa</span><span class="text-[#6d6d6d] tracking-[-0.3px]">12/12/2018 6:08 AM</span><span class="text-[#6d6d6d]">KQA File</span><span class="text-[#6d6d6d] text-right pr-[4px]">1 KB</span></div>
        <div class="grid grid-cols-[17px_241px_120px_100px_90px] pl-[20px] h-[21px] items-center"><svg width="13" height="15" fill="#fff" stroke="#a0a0a0"><path d="M.500.500h8l4 4v10H.500zM8.500.500v4h4"/></svg><span class="pl-[1px] whitespace-nowrap">5wgksbc1.32c</span><span class="text-[#6d6d6d] tracking-[-0.3px]">12/8/2017 2:47 PM</span><span class="text-[#6d6d6d]">32C File</span><span class="text-[#6d6d6d] text-right pr-[4px]">1 KB</span></div>
        <div class="grid grid-cols-[17px_241px_120px_100px_90px] pl-[20px] h-[21px] items-center"><svg width="13" height="15" fill="#fff" stroke="#a0a0a0"><path d="M.500.500h8l4 4v10H.500zM8.500.500v4h4"/></svg><span class="pl-[1px] whitespace-nowrap">43zyxsg5.ri3</span><span class="text-[#6d6d6d] tracking-[-0.3px]">8/2/2018 10:55 PM</span><span class="text-[#6d6d6d]">RI3 File</span><span class="text-[#6d6d6d] text-right pr-[4px]">1 KB</span></div>
        <div class="grid grid-cols-[17px_241px_120px_100px_90px] pl-[20px] h-[21px] items-center"><svg width="13" height="15" fill="#fff" stroke="#a0a0a0"><path d="M.500.500h8l4 4v10H.500zM8.500.500v4h4"/></svg><span class="pl-[1px] whitespace-nowrap">cjcsfa5p.b4u</span><span class="text-[#6d6d6d] tracking-[-0.3px]">11/24/2019 3:34 PM</span><span class="text-[#6d6d6d]">B4U File</span><span class="text-[#6d6d6d] text-right pr-[4px]">1 KB</span></div>
        <div class="grid grid-cols-[17px_241px_120px_100px_90px] pl-[20px] h-[21px] items-center"><svg width="13" height="15" fill="#fff" stroke="#a0a0a0"><path d="M.500.500h8l4 4v10H.500zM8.500.500v4h4"/></svg><span class="pl-[1px] whitespace-nowrap">enajqari.sqp</span><span class="text-[#6d6d6d] tracking-[-0.3px]">3/24/2018 3:43 PM</span><span class="text-[#6d6d6d]">SQP File</span><span class="text-[#6d6d6d] text-right pr-[4px]">1 KB</span></div>
        <div class="grid grid-cols-[17px_241px_120px_100px_90px] pl-[20px] h-[21px] items-center"><svg width="13" height="15" fill="#fff" stroke="#a0a0a0"><path d="M.500.500h8l4 4v10H.500zM8.500.500v4h4"/></svg><span class="pl-[1px] whitespace-nowrap">fyik4ilb.mey</span><span class="text-[#6d6d6d] tracking-[-0.3px]">7/30/2017 7:34 AM</span><span class="text-[#6d6d6d]">MEY File</span><span class="text-[#6d6d6d] text-right pr-[4px]">1 KB</span></div>
        <div class="grid grid-cols-[17px_241px_120px_100px_90px] pl-[20px] h-[21px] items-center"><svg width="13" height="15" fill="#fff" stroke="#a0a0a0"><path d="M.500.500h8l4 4v10H.500zM8.500.500v4h4"/></svg><span class="pl-[1px] whitespace-nowrap">gfi1islu.ssy</span><span class="text-[#6d6d6d] tracking-[-0.3px]">10/13/2019 6:03 AM</span><span class="text-[#6d6d6d]">SSY File</span><span class="text-[#6d6d6d] text-right pr-[4px]">1 KB</span></div>
        <div class="grid grid-cols-[17px_241px_120px_100px_90px] pl-[20px] h-[21px] items-center"><svg width="13" height="15" fill="#fff" stroke="#a0a0a0"><path d="M.500.500h8l4 4v10H.500zM8.500.500v4h4"/></svg><span class="pl-[1px] whitespace-nowrap">i0sq4vwm.daq</span><span class="text-[#6d6d6d] tracking-[-0.3px]">11/16/2018 11:52 ...</span><span class="text-[#6d6d6d]">DAQ File</span><span class="text-[#6d6d6d] text-right pr-[4px]">1 KB</span></div>
        <div class="grid grid-cols-[17px_241px_120px_100px_90px] pl-[20px] h-[21px] items-center"><svg width="13" height="15" fill="#fff" stroke="#a0a0a0"><path d="M.500.500h8l4 4v10H.500zM8.500.500v4h4"/></svg><span class="pl-[1px] whitespace-nowrap">icqct21h.lzk</span><span class="text-[#6d6d6d] tracking-[-0.3px]">5/31/2018 7:30 AM</span><span class="text-[#6d6d6d]">LZK File</span><span class="text-[#6d6d6d] text-right pr-[4px]">1 KB</span></div>
        <div class="grid grid-cols-[17px_241px_120px_100px_90px] pl-[20px] h-[21px] items-center"><svg width="13" height="15" fill="#fff" stroke="#a0a0a0"><path d="M.500.500h8l4 4v10H.500zM8.500.500v4h4"/></svg><span class="pl-[1px] whitespace-nowrap">id1bbqdw.xio</span><span class="text-[#6d6d6d] tracking-[-0.3px]">4/3/2020 10:47 PM</span><span class="text-[#6d6d6d]">XIO File</span><span class="text-[#6d6d6d] text-right pr-[4px]">1 KB</span></div>
        <div class="grid grid-cols-[17px_241px_120px_100px_90px] pl-[20px] h-[21px] items-center"><svg width="13" height="15" fill="#fff" stroke="#a0a0a0"><path d="M.500.500h8l4 4v10H.500zM8.500.500v4h4"/></svg><span class="pl-[1px] whitespace-nowrap">jxvhwyuz.f3j</span><span class="text-[#6d6d6d] tracking-[-0.3px]">10/9/2018 2:42 PM</span><span class="text-[#6d6d6d]">F3J File</span><span class="text-[#6d6d6d] text-right pr-[4px]">1 KB</span></div>
        <div class="grid grid-cols-[17px_241px_120px_100px_90px] pl-[20px] h-[21px] items-center"><svg width="13" height="15" fill="#fff" stroke="#a0a0a0"><path d="M.500.500h8l4 4v10H.500zM8.500.500v4h4"/></svg><span class="pl-[1px] whitespace-nowrap">kqb421zi.mql</span><span class="text-[#6d6d6d] tracking-[-0.3px]">5/31/2018 7:30 AM</span><span class="text-[#6d6d6d]">MQL File</span><span class="text-[#6d6d6d] text-right pr-[4px]">1 KB</span></div>
        <div class="grid grid-cols-[17px_241px_120px_100px_90px] pl-[20px] h-[21px] items-center"><svg width="13" height="15" fill="#fff" stroke="#a0a0a0"><path d="M.500.500h8l4 4v10H.500zM8.500.500v4h4"/></svg><span class="pl-[1px] whitespace-nowrap">kvp5.TMP</span><span class="text-[#6d6d6d] tracking-[-0.3px]">4/30/2020 11:22 PM</span><span class="text-[#6d6d6d]">TMP File</span><span class="text-[#6d6d6d] text-right pr-[4px]">1 KB</span></div>
      </div>
    </div>
  </div>
  <!-- status -->
  <div class="h-[21px] relative shrink-0 text-[#444] bg-white">
    <span class="absolute left-[14px] top-[1px]">37 items</span>
    <div class="absolute left-[736px] top-[-2px] w-[22px] h-[23px] bg-[#cce8ff] border border-[#3399e0] flex items-center justify-center"><svg width="14" height="13" fill="none" stroke="#445"><path d="M1 .500h3v3H1zM1 5h3v3H1zM1 9.500h3v3H1zM6 2h8M6 6.500h8M6 11h8"/></svg></div>
    <svg class="absolute left-[762px] top-[4px]" width="14" height="10"><rect x=".5" y=".5" width="13" height="9" fill="#cfe2f3" stroke="#999"/><path d="M1 7l5-3 7 2v3H1z" fill="#3c5a6e"/></svg>
  </div>
</div>

<!-- watermark -->
<div class="absolute left-[1041px] top-[608px] w-[200px] h-[54px] text-[48px] leading-[54px] text-white/60 font-['Liberation_Sans',sans-serif] pointer-events-none">
  <span class="absolute left-0 top-[-2px] origin-left scale-x-[0.62]">ANY</span>
  <svg class="absolute left-[70px] top-0" width="54" height="54" viewBox="0 0 54 54" fill="none" stroke="#fff" stroke-opacity="0.6" stroke-width="3"><path d="M3 8v38M12 2l40 25-40 25z"/><path d="M12 15v24l20-12z"/></svg>
  <span class="absolute left-[131px] top-[-2px] origin-left scale-x-[0.55]">RUN</span>
</div>
</body>
</html>
